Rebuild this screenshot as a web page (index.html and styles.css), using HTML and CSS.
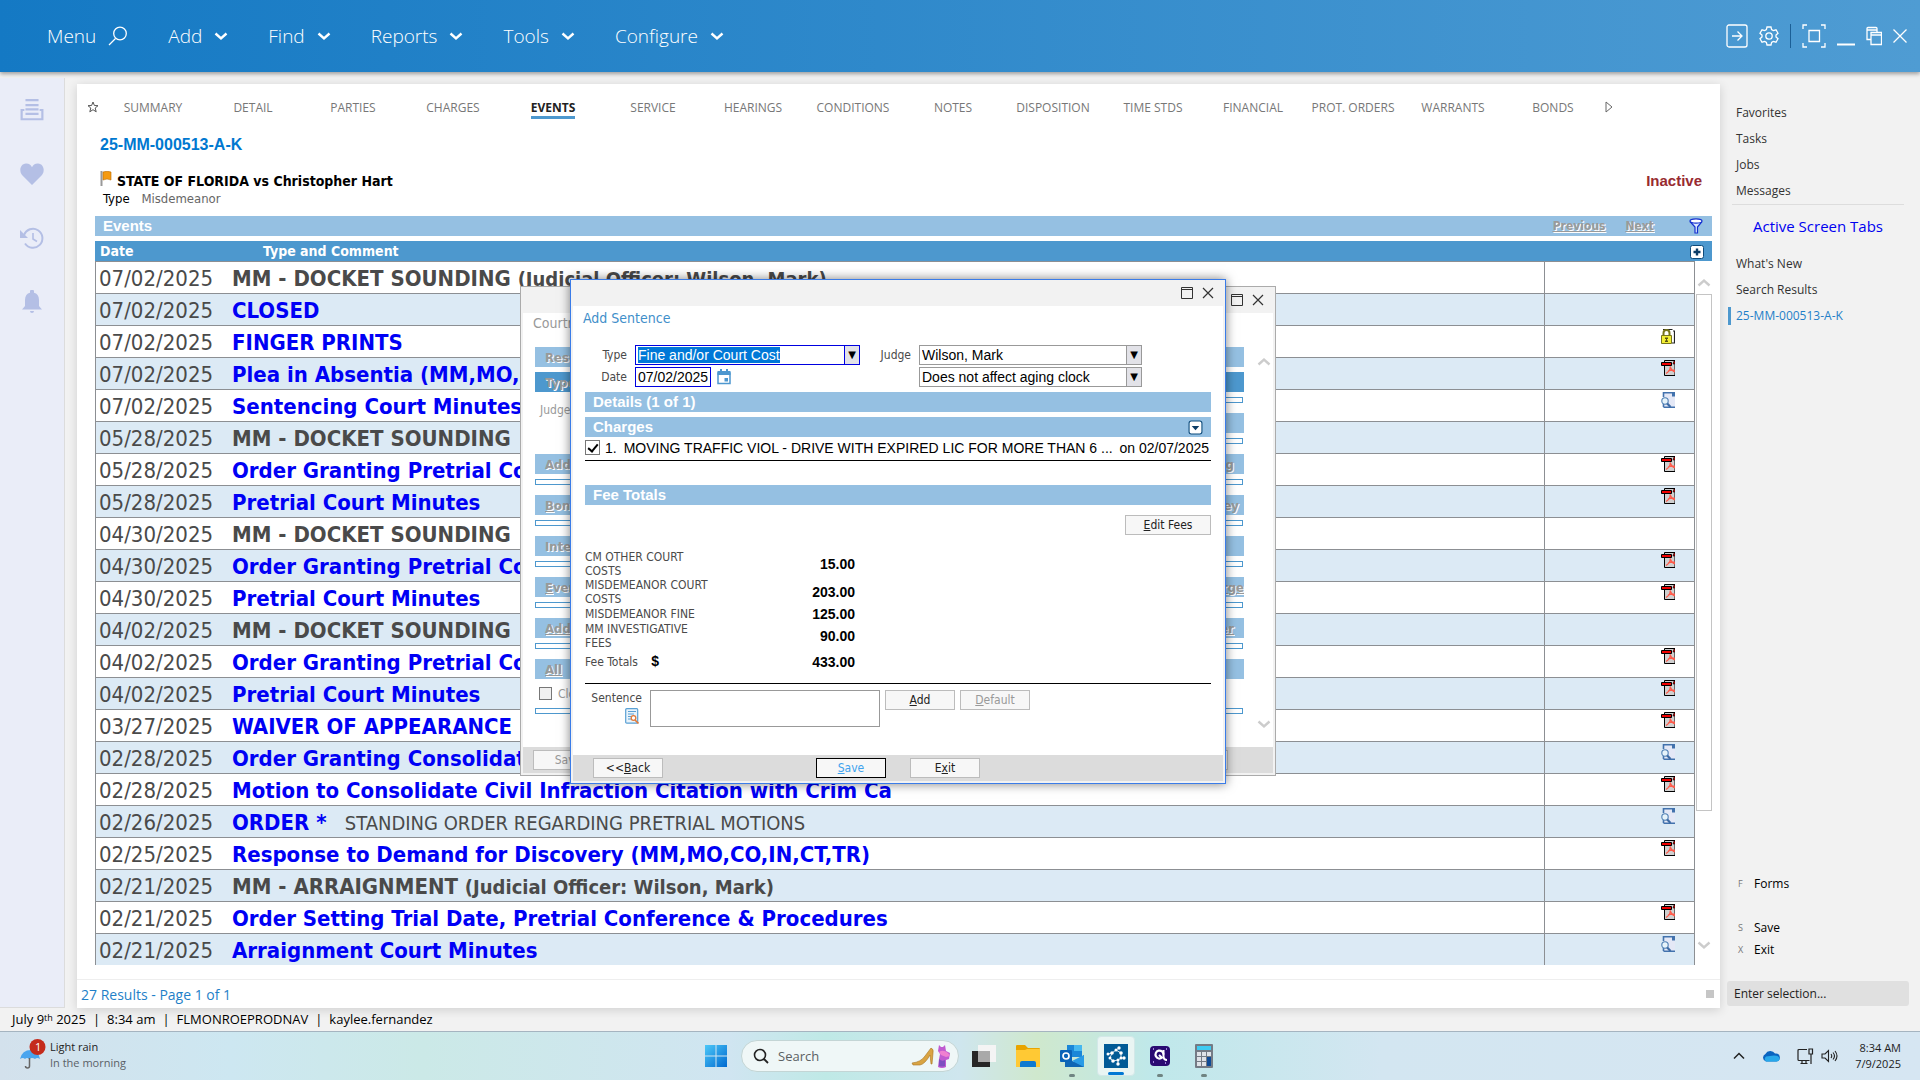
FILE: index.html
```html
<!DOCTYPE html>
<html lang="en">
<head>
  <meta charset="UTF-8" />
  <meta name="viewport" content="width=device-width, initial-scale=1.0" />
  <title>25-MM-000513-A-K - Events</title>
  <link rel="stylesheet" href="styles.css">
</head>
<body>
  <!-- Shared icons -->
  <svg class="sprite" aria-hidden="true">
    <symbol id="i-chev" viewBox="0 0 14 10"><path d="M1.5 2.5 7 7.5 12.5 2.5" fill="none" stroke="currentColor" stroke-width="2.4" /></symbol>
    <symbol id="i-max" viewBox="0 0 12 12"><path d="M.5.5h11v11H.5zM.5 2.5h11" fill="none" stroke="currentColor" /></symbol>
    <symbol id="i-close" viewBox="0 0 12 12"><path d="M1 1 11 11M11 1 1 11" fill="none" stroke="currentColor" stroke-width="1.2" /></symbol>
    <symbol id="i-pdf" viewBox="0 0 14 16">
      <path d="M3.5.5H14V15.5H3.5z" fill="#d0d0d0" stroke="#000" />
      <path d="M13 1h1v3h-2z" fill="#e00000" stroke="#000" stroke-width=".6" />
      <path d="M.5 2.500h10v3H.5z" fill="#f00000" stroke="#000" />
      <path d="M5 13.500C8 11.500 9.500 8.500 9 6.500c1 3 2.500 4.500 5 5.500M7 11c2-1 4-1.200 7-.8" fill="none" stroke="#ff5a4a" stroke-width="1.200" />
    </symbol>
    <symbol id="i-find" viewBox="0 0 14 16">
      <path d="M2.500.8h9l2.500 3V15.300H2.500z" fill="#e4e8f6" />
      <path d="M11 0h3v4.500h-3z" fill="#4272ad" />
      <path d="M2.500 5V.8h9M2.500 15.200H14M2.500 12v3" fill="none" stroke="#4272ad" stroke-width="1.600" />
      <circle cx="4" cy="9" r="3.200" fill="#e6f3fa" stroke="#4f7fb3" stroke-width="1.100" />
      <path d="M6.200 11.500 9.500 15" stroke="#3d6ba5" stroke-width="2.200" />
    </symbol>
    <symbol id="i-lock" viewBox="0 0 14 16">
      <path d="M2 1.500h9.500M12 3h1.500v12H11" fill="none" stroke="#222" stroke-width="1.200" />
      <path d="M2.500 8V5a3 3 0 0 1 6 0v3" fill="none" stroke="#77751a" stroke-width="2" />
      <path d="M.5 7.500h10v8H.5z" fill="#f2ee35" stroke="#77751a" />
      <path d="M4 9.500h3v1.500H6v1.500h1V14H4v-1.500h1V11H4z" fill="#5a5510" />
    </symbol>
  </svg>

  <!-- Top bar -->
  <header class="topbar">
    <nav class="menu">
      <button class="menu-item">Menu
        <svg class="menu-search" viewBox="0 0 20 20"><path d="M7.500 12.500 1 19" fill="none" stroke="#fff" stroke-width="1.300" /><circle cx="12" cy="7.500" r="6.300" fill="none" stroke="#fff" stroke-width="1.300" /></svg>
      </button>
      <button class="menu-item">Add <svg class="menu-chev"><use href="#i-chev" /></svg></button>
      <button class="menu-item">Find <svg class="menu-chev"><use href="#i-chev" /></svg></button>
      <button class="menu-item">Reports <svg class="menu-chev"><use href="#i-chev" /></svg></button>
      <button class="menu-item">Tools <svg class="menu-chev"><use href="#i-chev" /></svg></button>
      <button class="menu-item">Configure <svg class="menu-chev"><use href="#i-chev" /></svg></button>
    </nav>
    <div class="window-tools">
      <button aria-label="Go"><svg width="22" height="24" viewBox="0 0 22 24"><rect x="1" y="1" width="20" height="22" rx="2" /><path d="M6 12h9.500M11.500 7.500l4.500 4.500-4.500 4.500" /></svg></button>
      <button aria-label="Settings"><svg width="20" height="20" viewBox="0 0 20 20"><path d="M8 1h4l.6 2.600 1.700 1L17 3.800l2 3.500-2 1.700v2l2 1.700-2 3.500-2.700-.8-1.700 1L12 19H8l-.6-2.600-1.700-1-2.700.8-2-3.500L3 11V9L1 7.300l2-3.500 2.700.8 1.700-1z" /><circle cx="10" cy="10" r="3.200" /></svg></button>
      <span class="tool-sep"></span>
      <button aria-label="Focus"><svg width="24" height="24" viewBox="0 0 24 24"><path d="M1 5V1h4M19 1h4v4M23 19v4h-4M5 23H1v-4M7 6.500h10.500v11H7z" /></svg></button>
      <button aria-label="Minimize"><svg width="18" height="24" viewBox="0 0 18 24"><path d="M0 20.500h18" stroke-width="2" /></svg></button>
      <button aria-label="Restore"><svg width="16" height="20" viewBox="0 0 16 20"><path d="M5 13.500H1V2.500q0-1 1-1h8q1 0 1 1V6M1 4h10M5 6.500h10.500v12H5zM5 9h10.500" /></svg></button>
      <button aria-label="Close"><svg width="14" height="14" viewBox="0 0 14 14"><path d="M.5.5l13 13M13.500.5l-13 13" /></svg></button>
    </div>
  </header>

  <div class="workspace">
    <!-- Left rail -->
    <aside class="rail">
      <button aria-label="Inbox"><svg viewBox="0 0 22 22"><path d="M5 2h12M5 6.500h12M5 10.500h12M5 14.500h12" /><path d="M4 11H1.500v8.500h19V11H18" /></svg></button>
      <button aria-label="Favorites"><svg viewBox="0 0 24 22"><path class="solid" d="M12 22 2 12C-1 8.500-.2 1 6 .6 9 .5 11 2 12 4.200 13 2 15 .5 18 .6c6.200.4 7 7.900 4 11.400z" /></svg></button>
      <button aria-label="History"><svg viewBox="0 0 24 22"><path d="M5 16.500A9.500 9.500 0 1 0 4 8" /><path class="solid" d="M0 3v8h8z" /><path d="M13 6v6l4 2.500" stroke-width="1.600" /></svg></button>
      <button aria-label="Alerts"><svg viewBox="0 0 24 24"><path class="solid" d="M2 19.500 5 16V10c0-4 2-6.500 5-7.200V1.500a2 2 0 0 1 4 0v1.300c3 .7 5 3.200 5 7.200v6l3 3.500zM10 21h4a2 2 0 0 1-4 0z" /></svg></button>
    </aside>

    <!-- Case -->
    <main class="card">
      <nav class="tabs">
        <svg class="tab-star" viewBox="0 0 12 12"><path d="M6 1 7.400 4.500 11 4.700 8.200 7 9.200 10.800 6 8.700 2.800 10.800 3.800 7 1 4.700 4.600 4.500z" fill="none" stroke="#555" /></svg>
        <a href="#summary">SUMMARY</a>
        <a href="#detail">DETAIL</a>
        <a href="#parties">PARTIES</a>
        <a href="#charges">CHARGES</a>
        <a href="#events" class="active"><span>EVENTS</span></a>
        <a href="#service">SERVICE</a>
        <a href="#hearings">HEARINGS</a>
        <a href="#conditions">CONDITIONS</a>
        <a href="#notes">NOTES</a>
        <a href="#disposition">DISPOSITION</a>
        <a href="#time">TIME STDS</a>
        <a href="#financial">FINANCIAL</a>
        <a href="#orders">PROT. ORDERS</a>
        <a href="#warrants">WARRANTS</a>
        <a href="#bonds">BONDS</a>
        <svg class="tab-next" viewBox="0 0 8 12"><path d="M1 1v10l6-5z" fill="none" stroke="#666" /></svg>
      </nav>

      <section class="case-head">
        <h1>25-MM-000513-A-K</h1>
        <div class="case-line">
          <h2><svg class="flag" viewBox="0 0 12 15"><path d="M1.500 0v15" stroke="#999" stroke-width="2" /><path d="M3 1q4-1.500 8 0v8Q7 7 3 9z" fill="#f59a10" stroke="#b96a00" stroke-width=".6" /></svg>STATE OF FLORIDA vs Christopher Hart</h2>
          <strong class="status-flag">Inactive</strong>
        </div>
        <p class="case-type">Type <span>Misdemeanor</span></p>
      </section>

      <div class="events-bar">
        <h3>Events</h3>
        <button class="dim" disabled><u>P</u>revious</button>
        <button class="dim" disabled><u>N</u>ext</button>
        <button class="filter" aria-label="Filter"><svg viewBox="0 0 14 16"><path d="M1 3.500 6 9v6h2.500V9L13 3.500" fill="#dbe9ff" stroke="#1430d0" stroke-width="1.200" /><ellipse cx="7" cy="3" rx="6" ry="2.200" fill="#fff" stroke="#1430d0" stroke-width="1.200" /></svg></button>
      </div>

      <div class="events">
        <table>
          <colgroup><col class="c-date"><col><col class="c-doc"><col class="c-scroll"></colgroup>
          <thead>
            <tr>
              <th>Date</th>
              <th class="th-type">Type and Comment</th>
              <th colspan="2" class="th-add"><button aria-label="Add event"><svg viewBox="0 0 14 14"><rect x=".5" y=".5" width="13" height="13" rx="2" fill="#fff" stroke="#0d4a7a" /><path d="M7 3.500v7M3.500 7h7" stroke="#0b3c66" stroke-width="2.400" /></svg></button></th>
            </tr>
          </thead>
          <tbody>
            <tr><td>07/02/2025</td><td><b>MM - DOCKET SOUNDING <small>(Judicial Officer: Wilson, Mark)</small></b></td><td></td><td></td></tr>
            <tr><td>07/02/2025</td><td><a href="#e2">CLOSED</a></td><td></td><td></td></tr>
            <tr><td>07/02/2025</td><td><a href="#e3">FINGER PRINTS</a></td><td><svg><use href="#i-lock" /></svg></td><td></td></tr>
            <tr><td>07/02/2025</td><td><a href="#e4">Plea in Absentia (MM,MO,CO,IN,CT,TR)</a></td><td><svg><use href="#i-pdf" /></svg></td><td></td></tr>
            <tr><td>07/02/2025</td><td><a href="#e5">Sentencing Court Minutes</a></td><td><svg><use href="#i-find" /></svg></td><td></td></tr>
            <tr><td>05/28/2025</td><td><b>MM - DOCKET SOUNDING</b></td><td></td><td></td></tr>
            <tr><td>05/28/2025</td><td><a href="#e7">Order Granting Pretrial Continuance</a></td><td><svg><use href="#i-pdf" /></svg></td><td></td></tr>
            <tr><td>05/28/2025</td><td><a href="#e8">Pretrial Court Minutes</a></td><td><svg><use href="#i-pdf" /></svg></td><td></td></tr>
            <tr><td>04/30/2025</td><td><b>MM - DOCKET SOUNDING</b></td><td></td><td></td></tr>
            <tr><td>04/30/2025</td><td><a href="#e10">Order Granting Pretrial Continuance</a></td><td><svg><use href="#i-pdf" /></svg></td><td></td></tr>
            <tr><td>04/30/2025</td><td><a href="#e11">Pretrial Court Minutes</a></td><td><svg><use href="#i-pdf" /></svg></td><td></td></tr>
            <tr><td>04/02/2025</td><td><b>MM - DOCKET SOUNDING</b></td><td></td><td></td></tr>
            <tr><td>04/02/2025</td><td><a href="#e13">Order Granting Pretrial Continuance</a></td><td><svg><use href="#i-pdf" /></svg></td><td></td></tr>
            <tr><td>04/02/2025</td><td><a href="#e14">Pretrial Court Minutes</a></td><td><svg><use href="#i-pdf" /></svg></td><td></td></tr>
            <tr><td>03/27/2025</td><td><a href="#e15">WAIVER OF APPEARANCE</a></td><td><svg><use href="#i-pdf" /></svg></td><td></td></tr>
            <tr><td>02/28/2025</td><td><a href="#e16">Order Granting Consolidation</a></td><td><svg><use href="#i-find" /></svg></td><td></td></tr>
            <tr><td>02/28/2025</td><td><a href="#e17">Motion to Consolidate Civil Infraction Citation with Crim Ca</a></td><td><svg><use href="#i-pdf" /></svg></td><td></td></tr>
            <tr><td>02/26/2025</td><td><a href="#e18">ORDER *</a> <span class="comment">STANDING ORDER REGARDING PRETRIAL MOTIONS</span></td><td><svg><use href="#i-find" /></svg></td><td></td></tr>
            <tr><td>02/25/2025</td><td><a href="#e19">Response to Demand for Discovery (MM,MO,CO,IN,CT,TR)</a></td><td><svg><use href="#i-pdf" /></svg></td><td></td></tr>
            <tr><td>02/21/2025</td><td><b>MM - ARRAIGNMENT <small>(Judicial Officer: Wilson, Mark)</small></b></td><td></td><td></td></tr>
            <tr><td>02/21/2025</td><td><a href="#e21">Order Setting Trial Date, Pretrial Conference &amp; Procedures</a></td><td><svg><use href="#i-pdf" /></svg></td><td></td></tr>
            <tr><td>02/21/2025</td><td><a href="#e22">Arraignment Court Minutes</a></td><td><svg><use href="#i-find" /></svg></td><td></td></tr>
          </tbody>
        </table>
        <div class="scrollbar">
          <svg class="up"><use href="#i-chev" /></svg>
          <div class="thumb"></div>
          <svg><use href="#i-chev" /></svg>
        </div>
      </div>

      <div class="card-foot"><span>27 Results - Page 1 of 1</span><i class="grip"></i></div>
    </main>

    <!-- Right panel -->
    <aside class="side">
      <a href="#favorites">Favorites</a>
      <a href="#tasks">Tasks</a>
      <a href="#jobs">Jobs</a>
      <a href="#messages">Messages</a>
      <h2>Active Screen Tabs</h2>
      <a href="#new">What's New</a>
      <a href="#results">Search Results</a>
      <a href="#case" class="current">25-MM-000513-A-K</a>
      <div class="actions">
        <button class="forms"><kbd>F</kbd>Forms</button>
        <button><kbd>S</kbd>Save</button>
        <button><kbd>X</kbd>Exit</button>
      </div>
      <input type="text" placeholder="Enter selection..." aria-label="Enter selection" />
    </aside>
  </div>

  <footer class="statusbar">
    <span>July 9<span class="th">th</span> 2025</span><span>|</span><span>8:34 am</span><span>|</span><span>FLMONROEPRODNAV</span><span>|</span><span>kaylee.fernandez</span>
  </footer>

  <!-- Taskbar -->
  <div class="taskbar">
    <div class="weather">
      <svg width="26" height="30" viewBox="0 0 26 30"><path d="M0 20Q2 11 11 11q8 1 9 9-3-2-5 0-3-2-6 0-2-2-4 0-2-2-5 0z" fill="#4aa5ee" /><path d="M9.500 19v8q0 2-2 2t-2-2" fill="none" stroke="#666" stroke-width="1.500" /><circle cx="17.500" cy="8" r="8" fill="#c42b1c" /><text x="15" y="12" fill="#fff" font-size="11">1</text></svg>
      <div><p>Light rain</p><p class="sub">In the morning</p></div>
    </div>
    <div class="apps">
      <button aria-label="Start"><svg width="24" height="24" viewBox="0 0 24 24"><defs><linearGradient id="win" x1="0" y1="0" x2="1" y2="1"><stop offset="0" stop-color="#4cc8f8" /><stop offset="1" stop-color="#0069d0" /></linearGradient></defs><path fill="url(#win)" d="M1 1h10.500v10.500H1zM12.500 1H23v10.500H12.500zM1 12.500h10.500V23H1zM12.500 12.500H23V23H12.500z" /></svg></button>
      <label class="search">
        <svg width="16" height="16" viewBox="0 0 16 16"><circle cx="7" cy="7" r="5.500" fill="none" stroke="#222" stroke-width="1.600" /><path d="m11 11 4 4" stroke="#222" stroke-width="1.800" /></svg>
        <input type="text" placeholder="Search" />
        <svg width="40" height="26" viewBox="0 0 40 26"><path d="M1 20q9-1 13-7l6-8q3 1 2 5l-1 11h-1l-1-9q-5 9-10 10H2z" fill="#d9a443" stroke="#a87422" stroke-width=".6" /><path d="M28 2l2 2h2l2-2 1 6 4 2-1 6-3 1v7q-4 2-8 0l1-8 1-5-2-3z" fill="#c05bd0" /><path d="M28 9q4-3 9 1l2 3-4 1-5-2z" fill="#f080d0" /><path d="M28 16q3 3 6 1v6q-3 1-6 0z" fill="#7e4fc0" /></svg>
      </label>
      <button aria-label="Task view"><svg width="24" height="24" viewBox="0 0 24 24"><path d="M6 1h18v17H6z" fill="#f4f4f4" /><path d="M0 7h18v16H0z" fill="#262626" /><path d="M6 7h12v11H6z" fill="#a9a9a9" /></svg></button>
      <button aria-label="Explorer"><svg width="24" height="24" viewBox="0 0 24 24"><path d="M0 2q0-1 1-1h8l3 3h11q1 0 1 1v16H0z" fill="#e9a400" /><path d="M0 6h9l2-1h13v18H0z" fill="#ffc934" /><path d="M4 23v-4q0-2 2-2h12q2 0 2 2v4z" fill="#0f7ad0" /></svg></button>
      <button aria-label="Outlook" class="open"><svg width="24" height="24" viewBox="0 0 24 24"><path d="M7 1h15v12H7z" fill="#1b87d8" /><path d="M14 1h8v6h-8z" fill="#46b8f0" /><path d="m5 12 9 6 10-7v12H5z" fill="#1066b5" /><path d="m12 17 12 6V11z" fill="#2a9be6" /><rect y="6" width="12" height="12" rx="1" fill="#0a63b8" /><circle cx="6" cy="12" r="3" fill="none" stroke="#fff" stroke-width="1.700" /></svg></button>
      <button aria-label="Court system" class="current"><svg width="24" height="24" viewBox="0 0 24 24"><path d="M0 0h24v24H0z" fill="#005a96" /><path d="M4 10 8 9 12 6 15 4M12 6 17 9 17 14 20 14M17 14 14 16 9 17 6 14 8 9M14 16 14 20" fill="none" stroke="#fff" stroke-width=".8" /><g fill="#fff"><circle cx="4" cy="10" r="1.500" /><circle cx="8" cy="9" r="1.800" /><circle cx="12" cy="6" r="1.500" /><circle cx="15" cy="4" r="1.700" /><circle cx="17" cy="9" r="1.800" /><circle cx="20" cy="14" r="1.700" /><circle cx="17" cy="14" r="1.500" /><circle cx="14" cy="16" r="1.500" /><circle cx="14" cy="20" r="1.700" /><circle cx="9" cy="17" r="1.800" /><circle cx="6" cy="14" r="1.500" /></g></svg></button>
      <button aria-label="Quick tool" class="open"><svg width="22" height="22" viewBox="0 0 22 22"><rect x="1" y="1" width="20" height="20" rx="4" fill="#2a0a72" /><path d="M14.500 9.500a4 4 0 1 0-1.500 3.200l-3-2.700" fill="none" stroke="#fff" stroke-width="2.200" /><path d="M14.500 5v6q0 4 3.500 4" fill="none" stroke="#fff" stroke-width="2" /><path d="M4 4h1M17 4h1M4 17h1M16 18h1" stroke="#c9a8ff" stroke-width="1.500" /></svg></button>
      <button aria-label="Calculator" class="open"><svg width="20" height="24" viewBox="0 0 20 24"><rect x="1" width="18" height="24" rx="1" fill="#747b85" /><path d="M3 2h14v4H3z" fill="#3ecbf2" /><path d="M3 8h4v4H3zM8 8h4v4H8zM13 8h4v4h-4zM3 13h4v4H3zM8 13h4v4H8zM3 18h4v4H3zM8 18h4v4H8z" fill="#dfe3e8" /><path d="M13 13h4v9h-4z" fill="#0f4b96" /></svg></button>
    </div>
    <div class="tray">
      <svg width="12" height="8" viewBox="0 0 12 8"><path d="m1 6.500 5-5 5 5" fill="none" stroke="#222" stroke-width="1.500" /></svg>
      <svg width="18" height="12" viewBox="0 0 18 12"><path d="M4 11.500a4 4 0 0 1-.6-7.500A5.500 5.500 0 0 1 13 3.500a4 4 0 0 1 1.500 8z" fill="#0a64c0" /><path d="M4 11.500a3.500 3.500 0 0 1 0-5l8-1q5 0 5.500 3a2.800 2.800 0 0 1-3 3z" fill="#28a8ea" /></svg>
      <span class="net">
        <svg width="17" height="17" viewBox="0 0 17 17"><path d="M10 1.500H2q-1 0-1 1v9q0 1 1 1h10.500M5 12.500v3M9 12.500v3M3.500 15.500h7M12 1h3.500v5H12zM14 6v10" fill="none" stroke="#222" stroke-width="1.200" /></svg>
        <svg width="17" height="14" viewBox="0 0 17 14"><path d="M1 5h3l3.500-3.500v11L4 9H1zM10 5q1.500 2 0 4M12 3.500q3 3.500 0 7M14 2q4 5 0 10" fill="none" stroke="#222" stroke-width="1.100" /></svg>
      </span>
      <div class="clock"><p>8:34 AM</p><p>7/9/2025</p></div>
    </div>
  </div>

  <!-- Window behind -->
  <div class="window minutes">
    <div class="window-title"><svg><use href="#i-max" /></svg><svg><use href="#i-close" /></svg></div>
    <div class="window-body">
      <p class="minutes-name">Courtroom</p>
      <div class="stack">
        <div class="bar"><span>Results</span></div>
        <div class="pair">
          <div><div class="bar dark"><span>Type</span></div><p class="judge">Judge</p></div>
          <div><div class="bar dark"></div><div class="slot"></div><div class="bar"></div><div class="slot"></div></div>
        </div>
        <div class="bar"><span>Add</span><span>Hearing</span></div><div class="slot"></div>
        <div class="bar tight"><span><u>B</u>ond</span><span>Money</span></div><div class="slot"></div>
        <div class="bar"><span>Interp</span></div><div class="slot"></div>
        <div class="bar flush"><span><u>E</u>vent</span><span><u>Charge</u></span></div><div class="slot"></div>
        <div class="bar"><span><u>Add</u></span><span><u>Other</u></span></div><div class="slot"></div>
        <div class="bar"><span><u>All</u></span></div>
        <label class="close-case"><input type="checkbox" disabled /> Close</label>
        <div class="slot"></div>
      </div>
      <div class="minutes-scroll">
        <svg class="up"><use href="#i-chev" /></svg>
        <svg><use href="#i-chev" /></svg>
      </div>
    </div>
    <div class="window-foot"><button class="btn" disabled>Save</button><button class="btn" disabled>Exit</button></div>
  </div>

  <!-- Add Sentence -->
  <form class="window sentence">
    <div class="window-title"><svg><use href="#i-max" /></svg><svg><use href="#i-close" /></svg></div>
    <div class="window-body">
      <h2>Add Sentence</h2>
      <div class="fields">
        <label for="type">Type</label>
        <span class="combo focus"><select id="type"><option>Fine and/or Court Cost</option></select></span>
        <label for="judge">Judge</label>
        <span class="combo"><select id="judge"><option>Wilson, Mark</option></select></span>
        <label for="date">Date</label>
        <span class="date"><input type="text" id="date" value="07/02/2025" />
          <svg viewBox="0 0 14 16"><path d="M1 4h12v10.500H1z" fill="#fff" stroke="#4d97cf" stroke-width="1.500" /><path d="M.5 2h13v4H.5zM3 0h2v3H3zM9 0h2v3H9z" fill="#4d97cf" /><path d="M7.500 9H11v3.500H7.500z" fill="#4d97cf" /></svg>
        </span>
        <span></span>
        <span class="combo"><select aria-label="Aging clock"><option>Does not affect aging clock</option></select></span>
      </div>
      <h3 class="bar">Details (1 of 1)</h3>
      <h3 class="bar">Charges
        <button type="button" aria-label="Collapse"><svg viewBox="0 0 14 14"><rect x="1" y="1" width="12" height="12" rx="2" fill="#fff" stroke="#0d4a7a" /><path d="M3.500 5.500h7L7 9.500z" fill="#0b3c66" /></svg></button>
      </h3>
      <label class="charge"><input type="checkbox" checked /><span class="num">1.</span><span class="text">MOVING TRAFFIC VIOL - DRIVE WITH EXPIRED LIC FOR MORE THAN 6 ...</span><span>on 02/07/2025</span></label>
      <h3 class="bar fee-bar">Fee Totals</h3>
      <div class="fee-tools"><button type="button" class="btn wide"><u>E</u>dit Fees</button></div>
      <table class="fees">
        <tr><th>CM OTHER COURT COSTS</th><td>15.00</td></tr>
        <tr><th>MISDEMEANOR COURT COSTS</th><td>203.00</td></tr>
        <tr><th>MISDEMEANOR FINE</th><td>125.00</td></tr>
        <tr><th>MM INVESTIGATIVE FEES</th><td>90.00</td></tr>
        <tr class="total"><th>Fee Totals <b>$</b></th><td>433.00</td></tr>
      </table>
      <div class="sentence-row">
        <label for="sentence">Sentence
          <svg viewBox="0 0 14 16"><rect x=".7" y=".7" width="12" height="14.500" rx="1" fill="#e8f3fb" stroke="#5aa0d4" stroke-width="1.200" /><path d="M3 3.500h8M3 6h6M3 8.500h3M3 11h3" stroke="#5aa0d4" /><circle cx="8.500" cy="10" r="2.300" fill="#fff" stroke="#e07a3a" stroke-width="1.300" /><path d="m10 12 3.500 3.500" stroke="#e07a3a" stroke-width="1.600" /></svg>
        </label>
        <textarea id="sentence"></textarea>
        <button type="button" class="btn"><u>A</u>dd</button>
        <button type="button" class="btn" disabled><u>D</u>efault</button>
      </div>
    </div>
    <div class="window-foot">
      <button type="button" class="btn">&lt;&lt;<u>B</u>ack</button>
      <button type="button" class="btn save"><u>S</u>ave</button>
      <button type="button" class="btn">E<u>x</u>it</button>
    </div>
  </form>
</body>
</html>
```

FILE: styles.css
```css
* {
  box-sizing: border-box;
}
:root {
  --ui: "Open Sans", "Noto Sans", sans-serif;
  --data: "DejaVu Sans Condensed", "Noto Sans", sans-serif;
  --plain: "Liberation Sans", Arial, sans-serif;
  --blue: #4d98ce;
  --light: #95c0e2;
}
body {
  margin: 0;
  height: 100vh;
  display: flex;
  flex-direction: column;
  background: #f2f2f2;
  font-family: var(--ui);
  font-size: 12px;
  overflow: hidden;
}
h1, h2, h3, p {
  margin: 0;
}
button {
  border: 0;
  padding: 0;
  background: none;
  color: inherit;
  font: inherit;
}
a {
  color: inherit;
  text-decoration: none;
}
.sprite {
  display: none;
}

/* Top bar */
.topbar {
  display: flex;
  align-items: center;
  justify-content: space-between;
  height: 72px;
  flex: none;
  padding: 0 13px 0 47px;
  background: linear-gradient(90deg, #1479c4, #4f9cd3);
  color: #fff;
  box-shadow: 0 2px 4px rgba(0, 0, 0, .35);
}
.menu {
  display: flex;
  gap: 40px;
}
.menu-item {
  display: flex;
  align-items: center;
  gap: 12px;
  font-size: 19px;
  font-weight: 300;
  line-height: 28px;
}
.menu-search {
  width: 20px;
  height: 20px;
}
.menu-chev {
  width: 14px;
  height: 10px;
}
.window-tools {
  display: flex;
  align-items: center;
  gap: 11px;
}
.window-tools button {
  display: flex;
}
.window-tools svg {
  fill: none;
  stroke: #fff;
  stroke-width: 1.3;
}
.tool-sep {
  width: 1px;
  height: 24px;
  background: #1b5f96;
}

/* Layout */
.workspace {
  flex: 1;
  min-height: 0;
  display: flex;
  padding-top: 6px;
}
.rail {
  width: 65px;
  flex: none;
  display: flex;
  flex-direction: column;
  align-items: center;
  gap: 40px;
  padding-top: 20px;
  background: #eaedf8;
  border-right: 1px solid #dcdcdc;
  border-bottom: 1px solid #dcdcdc;
}
.rail button {
  display: flex;
}
.rail svg {
  width: 24px;
  height: 24px;
  fill: none;
  stroke: #b4bfe5;
  stroke-width: 2;
}
.rail .solid {
  fill: #b4bfe5;
  stroke: none;
}
.card {
  flex: 1;
  min-width: 0;
  display: flex;
  flex-direction: column;
  margin: 6px 0 0 12px;
  background: #fff;
  box-shadow: 0 2px 10px rgba(0, 0, 0, .15);
}

/* Tabs */
.tabs {
  display: flex;
  align-items: center;
  height: 46px;
  flex: none;
  padding-left: 10px;
  color: #777;
  font-size: 12px;
}
.tabs a {
  width: 100px;
  text-align: center;
  white-space: nowrap;
}
.tabs .active {
  color: #222;
  font-weight: bold;
}
.tabs .active span {
  border-bottom: 3px solid var(--blue);
}
.tab-star {
  width: 12px;
  height: 12px;
  margin-right: 4px;
}
.tab-next {
  width: 8px;
  height: 12px;
  margin-left: 2px;
}

/* Case header */
.case-head {
  height: 86px;
  flex: none;
  padding: 5px 18px 0 23px;
  font-family: var(--data);
}
.case-head h1 {
  color: #0078d0;
  font: bold 16px/20px var(--plain);
}
.case-line {
  display: flex;
  justify-content: space-between;
  margin-top: 16px;
  line-height: 20px;
}
.case-head h2 {
  display: flex;
  font-size: 14px;
}
.flag {
  width: 12px;
  height: 15px;
  margin-right: 5px;
}
.status-flag {
  color: #982b30;
  font: bold 15px/20px var(--plain);
}
.case-type {
  padding-left: 3px;
  font-size: 13px;
  line-height: 16px;
}
.case-type span {
  margin-left: 8px;
  color: #666;
}

/* Events */
.events-bar {
  display: flex;
  align-items: center;
  height: 20px;
  flex: none;
  margin: 0 8px 5px 18px;
  padding: 0 8px;
  background: var(--light);
}
.events-bar h3 {
  flex: 1;
  color: #fff;
  font: bold 15px/20px var(--plain);
}
.dim {
  margin-right: 20px;
  color: #9a9a9a;
  font: bold 12px/16px var(--data);
  text-decoration: underline;
  text-shadow: 1px 1px 0 #fff;
}
.filter {
  display: flex;
  margin-left: 14px;
}
.filter svg {
  width: 16px;
  height: 16px;
}
.events {
  position: relative;
  flex: 1;
  min-height: 0;
  overflow: hidden;
  margin: 0 8px 14px 18px;
}
.events table {
  width: 100%;
  table-layout: fixed;
  border-collapse: separate;
  border-spacing: 0;
  font-family: var(--data);
}
.c-date {
  width: 134px;
}
.c-doc {
  width: 151px;
}
.c-scroll {
  width: 17px;
}
.events th {
  height: 20px;
  padding: 0 5px;
  background: var(--blue);
  color: #fff;
  font-size: 14px;
  line-height: 18px;
  text-align: left;
}
.events .th-type {
  padding-left: 34px;
}
.events .th-add {
  padding: 0 8px;
  text-align: right;
}
.th-add button {
  display: inline-flex;
  vertical-align: middle;
}
.th-add svg {
  width: 14px;
  height: 14px;
}
.events td {
  height: 32px;
  padding: 2px 3px 0;
  border-top: 1px solid #8c8f93;
  color: #4a4a4a;
  font-size: 22px;
  line-height: 28px;
  white-space: nowrap;
}
.events tbody tr:nth-child(even) td {
  background: #dceaf5;
}
.events td:first-child {
  border-left: 1px solid #8c8f93;
}
.events td:nth-child(3) {
  padding: 2px 19px 0 0;
  border-left: 1px solid #8c8f93;
  border-right: 1px solid #8c8f93;
  text-align: right;
  vertical-align: top;
  line-height: 0;
}
.events tbody tr td:last-child {
  border: 0;
  background: #fff;
}
.events td svg {
  width: 14px;
  height: 16px;
}
.events td a {
  color: #0000f5;
  font-weight: bold;
}
.events td small {
  font-size: 20px;
}
.comment {
  margin-left: 12px;
  font-size: 20px;
}
.scrollbar {
  position: absolute;
  top: 20px;
  right: 0;
  bottom: 0;
  width: 16px;
  display: flex;
  flex-direction: column;
  align-items: center;
  padding: 17px 0 15px;
  color: #ccc;
}
.scrollbar svg {
  width: 14px;
  height: 10px;
}
.up {
  transform: rotate(180deg);
}
.thumb {
  width: 16px;
  height: 77%;
  margin: 6px 0 auto;
  border: 1px solid #c4c4c4;
  background: #fff;
}
.card-foot {
  display: flex;
  align-items: center;
  justify-content: space-between;
  height: 29px;
  flex: none;
  padding: 0 6px 0 4px;
  border-top: 1px solid #eee;
  color: #1f7fc8;
  font-size: 14px;
}
.grip {
  width: 8px;
  height: 8px;
  background: #c6c6c6;
}

/* Right panel */
.side {
  width: 200px;
  flex: none;
  display: flex;
  flex-direction: column;
  padding: 22px 11px 2px 7px;
  color: #333;
}
.side a {
  padding-left: 9px;
  line-height: 26px;
}
.side h2 {
  margin: 0 5px 11px;
  padding-top: 8px;
  border-top: 1px solid #ddd;
  color: #0000f0;
  font-size: 15px;
  font-weight: normal;
  line-height: 27px;
  text-align: center;
}
.side .current {
  margin: 4px 0 0 1px;
  padding-left: 5px;
  border-left: 3px solid var(--blue);
  color: #1f7fc8;
  line-height: 18px;
}
.actions {
  display: flex;
  flex-direction: column;
  margin: auto 0 20px;
  color: #000;
}
.actions button {
  display: flex;
  align-items: center;
  padding-left: 11px;
  line-height: 22px;
}
.actions .forms {
  margin-bottom: 22px;
}
.actions kbd {
  width: 16px;
  color: #777;
  font: 9px/22px var(--ui);
  text-align: left;
}
.side input {
  width: 100%;
  height: 25px;
  padding: 0 7px;
  border: 0;
  border-radius: 3px;
  background: #e0e0e0;
  font: 12px var(--ui);
}
.side input::placeholder {
  color: #222;
}
.statusbar {
  display: flex;
  gap: 7px;
  height: 24px;
  flex: none;
  padding-left: 12px;
  border-bottom: 1px solid #a5b4c0;
  color: #000;
  font-size: 13px;
  line-height: 22px;
}
.th {
  font-size: 9px;
  vertical-align: 3px;
  line-height: 0;
}

/* Taskbar */
.taskbar {
  display: grid;
  grid-template-columns: 1fr auto 1fr;
  height: 48px;
  flex: none;
  background: linear-gradient(90deg, #d3e1ec, #cde7f1 12%, #cbe9e7 22%, #d0e5f1 38%, #bfe9e6 43%, #cfe6ee 50%, #cfe8cd 54%, #bfe8ea 60%, #d3e6f1 72%, #d6e6f2);
}
.weather {
  display: flex;
  gap: 4px;
  padding: 7px 0 0 20px;
  color: #222;
  font-size: 11px;
  line-height: 16px;
}
.sub {
  color: #5a6166;
}
.apps {
  display: flex;
  align-items: center;
}
.apps button {
  position: relative;
  width: 44px;
  height: 48px;
  display: flex;
  align-items: center;
  justify-content: center;
}
.apps .open::after,
.apps .current::after {
  content: "";
  position: absolute;
  bottom: 3px;
  width: 6px;
  height: 3px;
  border-radius: 2px;
  background: #6f8482;
}
.apps .current {
  height: 40px;
  width: 38px;
  margin: 0 3px;
  border: 1px solid #d2e8e8;
  border-radius: 4px;
  background: #e9f5f3;
}
.apps .current::after {
  bottom: 0;
  width: 16px;
  background: #0078d4;
}
.search {
  display: flex;
  align-items: center;
  gap: 9px;
  width: 218px;
  height: 32px;
  margin: 0 3px;
  padding: 0 7px 0 11px;
  border: 1px solid #c3d5d5;
  border-radius: 16px;
  background: #eff7f7;
}
.search input {
  flex: 1;
  min-width: 0;
  border: 0;
  padding: 0;
  background: none;
  font: 13px var(--ui);
}
.search input::placeholder {
  color: #5b6163;
}
.tray {
  display: flex;
  align-items: center;
  justify-content: flex-end;
  gap: 17px;
  padding-right: 19px;
  color: #222;
  font-size: 11px;
  line-height: 16px;
  text-align: right;
}
.net {
  display: flex;
  align-items: center;
  gap: 7px;
}

/* Windows */
.window {
  position: absolute;
  border: 1px solid #ababab;
  padding: 0 2px 2px;
  background: #f2f2f2;
  font-family: var(--data);
  font-size: 12px;
}
.window-title {
  display: flex;
  align-items: center;
  justify-content: flex-end;
  gap: 9px;
  height: 26px;
  padding-right: 9px;
  color: #333;
}
.window-title svg {
  width: 12px;
  height: 12px;
}
.window-body {
  background: #fff;
}
.window-foot {
  display: flex;
  height: 26px;
  padding: 3px 10px;
  background: #dcdcdc;
}
.bar {
  display: flex;
  justify-content: space-between;
  align-items: center;
  height: 20px;
  background: var(--light);
}
.btn {
  width: 70px;
  height: 20px;
  flex: none;
  border: 1px solid #bcbcbc;
  background: #f7f7f7;
  color: #222;
  font: 12px/18px var(--data);
}
.btn:disabled {
  color: #999;
}
.btn.wide {
  width: 86px;
}

.minutes {
  left: 520px;
  top: 286px;
  width: 756px;
  color: #999;
}
.minutes .window-body {
  display: grid;
  grid-template-columns: 1fr 30px;
  grid-template-rows: 34px 400px;
  padding-left: 10px;
}
.minutes-name {
  grid-column: 1 / 3;
  font-size: 14px;
  line-height: 20px;
}
.stack {
  display: flex;
  flex-direction: column;
  margin: 0 -1px 0 2px;
}
.stack .bar {
  flex: none;
  padding: 0 10px;
  overflow: hidden;
  font-size: 13px;
  font-weight: bold;
  text-shadow: 1px 1px 0 #fff;
}
.stack .bar + .slot {
  margin-top: 5px;
}
.slot {
  height: 6px;
  flex: none;
  margin: 0 1px 10px 0;
  border: 1px solid var(--blue);
}
.stack .dark {
  background: var(--blue);
}
.stack .flush {
  padding-right: 0;
}
.stack .tight {
  padding-right: 5px;
}
.pair {
  display: grid;
  grid-template-columns: 1fr 1fr;
  height: 82px;
  margin-top: 5px;
  flex: none;
}
.judge {
  padding: 11px 5px 0;
}
.close-case {
  display: flex;
  align-items: center;
  gap: 6px;
  height: 29px;
  padding-left: 4px;
}
.close-case input,
.charge input {
  appearance: none;
  width: 13px;
  height: 13px;
  margin: 0;
  flex: none;
  border: 1px solid #777;
  background: #f0f0f0;
}
.minutes-scroll {
  display: flex;
  flex-direction: column;
  justify-content: space-between;
  align-items: center;
  padding: 10px 0 18px 12px;
  color: #ccc;
}
.minutes-scroll svg {
  width: 14px;
  height: 10px;
}
.minutes .window-foot {
  justify-content: space-between;
  padding-right: 45px;
}

.sentence {
  left: 570px;
  top: 279px;
  width: 656px;
  border-color: #3a7ce8;
  box-shadow: 0 0 10px rgba(0, 0, 0, .5);
  color: #4a4a4a;
}
.sentence .window-body {
  padding: 2px 12px 28px;
}
.sentence h2 {
  margin-left: -2px;
  color: #3f8fca;
  font-size: 14px;
  font-weight: normal;
  line-height: 20px;
}
.fields {
  display: grid;
  grid-template-columns: 42px 225px 43px 223px;
  column-gap: 8px;
  row-gap: 2px;
  margin: 17px 0 5px;
  align-items: center;
}
.fields > label {
  text-align: right;
}
.combo {
  position: relative;
  display: flex;
}
.combo select,
.date input {
  appearance: none;
  width: 100%;
  height: 20px;
  padding: 0 2px;
  border: 1px solid #999;
  border-radius: 0;
  background: #fff;
  color: #000;
  font: 14px var(--plain);
}
.combo::after {
  content: "▼";
  position: absolute;
  top: 1px;
  right: 1px;
  width: 14px;
  height: 18px;
  border-left: 1px solid #999;
  background: #e2e2e8;
  color: #000;
  font: 10px/17px "DejaVu Sans", sans-serif;
  text-align: center;
}
.combo.focus select {
  border-color: #0000e0;
  background: linear-gradient(#0078d7, #0078d7) 2px 1px / 142px 16px no-repeat #fff;
  color: #fff;
}
.focus::after {
  border-color: #0000e0;
}
.date {
  display: flex;
  align-items: center;
  gap: 6px;
}
.date input {
  width: 76px;
  border-color: #0000e0;
}
.date svg {
  width: 14px;
  height: 16px;
}
.sentence .bar {
  padding: 0 8px;
  margin-bottom: 5px;
  color: #fff;
  font: bold 15px/20px var(--plain);
}
.bar button {
  display: flex;
}
.bar button svg {
  width: 15px;
  height: 15px;
}
.sentence .charge {
  display: flex;
  align-items: center;
  height: 24px;
  margin-top: -5px;
  padding: 0 2px 2px 0;
  border-bottom: 1px solid #000;
  color: #000;
  font: 14px/20px var(--plain);
  white-space: nowrap;
}
.charge input {
  display: grid;
  place-items: center;
  width: 15px;
  height: 15px;
  background: #fff;
}
.charge input::before {
  content: "";
  width: 4px;
  height: 8px;
  margin-bottom: 2px;
  border: solid #000;
  border-width: 0 2px 2px 0;
  transform: rotate(40deg);
}
.num {
  padding: 0 7px 0 5px;
}
.charge .text {
  flex: 1;
}
.sentence .fee-bar {
  margin: 24px 0 10px;
}
.fee-tools {
  display: flex;
  justify-content: flex-end;
}
.fees {
  width: 270px;
  margin: 15px 0 14px;
  border-spacing: 0;
  line-height: 14px;
}
.fees th,
.fees td {
  height: 16px;
  padding: 0;
  font-weight: normal;
  text-align: left;
}
.fees th {
  width: 130px;
}
.fees td,
.fees b {
  color: #000;
  font: bold 14px/14px var(--plain);
  text-align: right;
}
.fees b {
  margin-left: 10px;
}
.total th,
.total td {
  padding-top: 4px;
}
.sentence-row {
  display: grid;
  grid-template-columns: 60px 230px 70px 70px;
  column-gap: 5px;
  padding-top: 6px;
  border-top: 1px solid #000;
}
.sentence-row label {
  display: flex;
  flex-direction: column;
  align-items: flex-end;
  gap: 3px;
  padding: 1px 3px 0 0;
}
.sentence-row svg {
  width: 14px;
  height: 16px;
  margin-right: 3px;
}
.sentence-row textarea {
  height: 37px;
  border: 1px solid #999;
  resize: none;
}
.sentence .window-foot {
  padding-left: 20px;
}
.window-foot .save {
  margin: 0 24px 0 153px;
  border-color: #000;
  color: #3fa3ee;
}
```
